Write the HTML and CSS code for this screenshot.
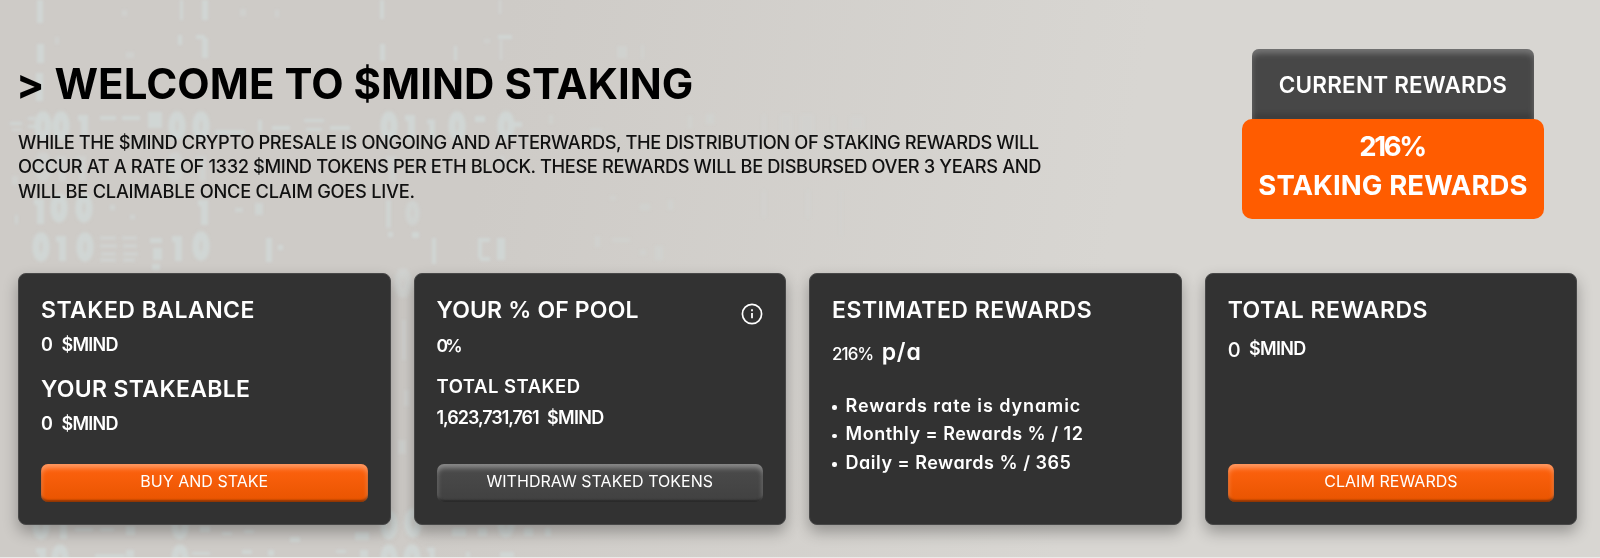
FILE: index.html
```html
<!DOCTYPE html>
<html lang="en">
<head>
    <meta charset="UTF-8">
    <meta name="viewport" content="width=device-width, initial-scale=1.0">
    <title>$MIND Staking</title>
    <link rel="stylesheet" href="styles.css">
</head>
<body>
    <!-- Faded binary code behind the content -->
    <svg class="code-bg" viewBox="0 0 1100 558" aria-hidden="true">
        <defs>
            <symbol id="zero" viewBox="0 0 18 30"><ellipse cx="9" cy="15" rx="5" ry="11" fill="none" stroke="#d0d6d4" stroke-width="7.5"/></symbol>
            <symbol id="one" viewBox="0 0 18 30"><path d="M4 4h10v25H7V10H4z" fill="#d0d6d4"/></symbol>
            <symbol id="dashes" viewBox="0 0 44 30"><path d="M2 6h16M24 6h15M2 14h17M25 14h14M3 22h15M25 22h15M2 28h16M25 28h12" stroke="#d0d6d4" stroke-width="2.5"/></symbol>
            <filter id="soft"><feGaussianBlur stdDeviation="1.8"/></filter>
        </defs>
        <g filter="url(#soft)" fill="#d0d6d4">
            <path d="M37 0h6v23h-6zM37 44h7v19h-7zM36 73h7v28h-7zM180 0h3v20h-3zM202 0h6v20h-6zM178 35h4v10h-4zM202 38h6v20h-6zM196 35h9v4h-9zM380 0h4v19h-4zM380 44h5v17h-5zM454 46h3v15h-3zM499 0h2v14h-2zM500 40h2v20h-2zM498 35h14v4h-14z"/>
            <path d="M122 10h5v6h-5zM240 9h6v7h-6zM275 10h4v7h-4zM55 37h4v7h-4zM126 52h8v6h-8zM484 39h6v4h-6zM617 46h10v12h-10zM641 45h3v14h-3z" opacity=".6"/>

            <path d="M10 122h12v3h-12zM12 129h10v2h-10zM28 117h7v3h-7zM28 125h7v3h-7z"/>
            <use href="#zero" x="34" y="111" width="18" height="30"/>
            <use href="#zero" x="52" y="111" width="18" height="30"/>
            <use href="#one" x="74" y="111" width="18" height="30"/>
            <path d="M100 116h16v4h-16zM122 116h18v4h-18zM148 112h14v16h-14zM215 130h30v4h-30zM258 120h4v12h-4zM272 126h18v4h-18zM304 119h20v3h-20zM306 128h16v3h-16zM330 126h20v4h-20z"/>
            <use href="#zero" x="168" y="111" width="18" height="30"/>
            <use href="#zero" x="192" y="111" width="18" height="30"/>
            <use href="#zero" x="380" y="111" width="18" height="30"/>
            <use href="#one" x="401" y="111" width="18" height="30"/>
            <use href="#one" x="424" y="115" width="14" height="26"/>
            <use href="#zero" x="448" y="111" width="18" height="30"/>
            <path d="M475 116h10v6h-10zM514 122h8v5h-8z"/>
            <use href="#zero" x="496" y="111" width="20" height="30"/>

            <g opacity=".6">
                <use href="#zero" x="34" y="152" width="18" height="30"/>
                <use href="#one" x="52" y="152" width="18" height="30"/>
                <use href="#one" x="72" y="152" width="18" height="30"/>
                <use href="#zero" x="166" y="152" width="18" height="30"/>
                <use href="#one" x="192" y="152" width="18" height="30"/>
                <use href="#one" x="382" y="152" width="18" height="30"/>
                <path d="M12 176h6v9h-6zM256 160h6v14h-6zM500 156h4v14h-4z"/>
            </g>

            <use href="#one" x="30" y="195" width="18" height="30"/>
            <use href="#zero" x="50" y="193" width="18" height="30"/>
            <use href="#zero" x="75" y="193" width="18" height="30"/>
            <use href="#one" x="194" y="196" width="18" height="30"/>
            <path d="M15 215h3v9h-3zM110 205h5v5h-5zM130 215h5v4h-5zM235 208h8v4h-8zM255 203h8v12h-8zM386 200h5v28h-5z" opacity=".8"/>
            <use href="#zero" x="405" y="198" width="15" height="30" opacity=".7"/>

            <use href="#zero" x="32" y="232" width="18" height="30"/>
            <use href="#one" x="52" y="232" width="18" height="30"/>
            <use href="#zero" x="75" y="232" width="20" height="30"/>
            <use href="#dashes" x="98" y="232" width="44" height="30"/>
            <path d="M150 238h12v5h-12zM153 248h9v12h-9zM152 264h8v6h-8zM266 238h6v24h-6zM278 245h5v5h-5zM388 232h5v5h-5zM412 232h7v6h-7zM432 238h4v26h-4zM478 238h12v4h-12zM478 242h4v16h-4zM480 257h10v4h-10zM497 238h8v22h-8z"/>
            <use href="#one" x="168" y="232" width="18" height="30"/>
            <use href="#zero" x="192" y="230" width="18" height="32"/>

            <use href="#zero" x="394" y="268" width="18" height="30" opacity=".6"/>
            <path d="M402 320h4v40h-4zM404 390h5v16h-5zM398 440h8v14h-8z" opacity=".6"/>

            <use href="#zero" x="32" y="510" width="18" height="30"/>
            <use href="#one" x="53" y="510" width="18" height="30"/>
            <use href="#zero" x="170" y="510" width="20" height="30"/>
            <use href="#zero" x="380" y="510" width="18" height="30"/>
            <use href="#zero" x="404" y="508" width="18" height="30"/>
            <use href="#zero" x="496" y="508" width="20" height="30"/>
            <path d="M75 528h18v3h-18zM100 528h14v3h-14zM126 526h9v9h-9zM200 526h10v6h-10zM222 532h10v3h-10zM244 530h10v3h-10zM290 537h10v5h-10zM355 532h14v8h-14zM452 528h14v8h-14zM478 528h9v8h-9zM524 528h9v8h-9zM545 528h6v8h-6z"/>
            <use href="#one" x="32" y="544" width="18" height="30"/>
            <use href="#zero" x="51" y="544" width="18" height="30"/>
            <use href="#zero" x="170" y="544" width="20" height="30"/>
            <use href="#zero" x="380" y="544" width="18" height="30"/>
            <use href="#zero" x="402" y="544" width="20" height="30"/>
            <use href="#one" x="424" y="541" width="14" height="30"/>
            <path d="M95 554h30v4h-30zM126 550h8v8h-8zM192 552h18v3h-18zM242 550h10v4h-10zM268 550h6v6h-6zM336 550h10v3h-10zM360 550h8v8h-8zM466 552h4v6h-4zM500 552h14v6h-14z"/>

            <path d="M549 115h4v9h-4zM590 128h12v5h-12zM610 196h6v4h-6zM640 204h10v6h-10zM668 200h5v10h-5zM595 236h5v11h-5zM612 238h18v4h-18zM640 250h6v5h-6zM655 246h8v14h-8zM688 116h4v12h-4zM706 114h8v10h-8z" opacity=".45"/>
            <path d="M762 114h4v26h-4zM780 114h12v26h-12zM800 114h14v26h-14zM832 116h3v18h-3zM850 116h14v14h-14zM762 190h4v28h-4zM806 190h4v28h-4zM840 190h2v46h-2z" opacity=".22"/>
        </g>
    </svg>

    <main class="staking">
        <section class="hero">
            <div class="intro">
                <h1>&gt; WELCOME TO $MIND STAKING</h1>
                <p>WHILE THE $MIND CRYPTO PRESALE IS ONGOING AND AFTERWARDS, THE DISTRIBUTION OF STAKING REWARDS WILL<br>
                OCCUR AT A RATE OF 1332 $MIND TOKENS PER ETH BLOCK. THESE REWARDS WILL BE DISBURSED OVER 3 YEARS AND<br>
                <span class="last-line">WILL BE CLAIMABLE ONCE CLAIM GOES LIVE.</span></p>
            </div>
            <div class="rewards">
                <div class="rewards-label">CURRENT REWARDS</div>
                <div class="rewards-rate"><span class="percent">216%</span><span>STAKING REWARDS</span></div>
            </div>
        </section>

        <section class="cards">
            <div class="card">
                <h2>STAKED BALANCE</h2>
                <div class="value"><span>0</span><span class="token">$MIND</span></div>
                <h2 class="second">YOUR STAKEABLE</h2>
                <div class="value"><span>0</span><span class="token">$MIND</span></div>
                <button class="btn">BUY AND STAKE</button>
            </div>

            <div class="card">
                <div class="card-head">
                    <h2 class="pool">YOUR % OF POOL</h2>
                    <svg class="info" viewBox="0 0 22 22" fill="none" stroke="#fff">
                        <circle cx="11" cy="11" r="9.6" stroke-width="1.7"/>
                        <path d="M11 10v5.2M11 6.2v2" stroke-width="1.8"/>
                    </svg>
                </div>
                <div class="value"><span class="pool-share">0%</span></div>
                <h3>TOTAL STAKED</h3>
                <div class="value total"><span class="amount">1,623,731,761</span><span class="token">$MIND</span></div>
                <button class="btn btn-dark">WITHDRAW STAKED TOKENS</button>
            </div>

            <div class="card">
                <h2>ESTIMATED REWARDS</h2>
                <div class="estimate"><span class="rate">216%</span><span class="pa">p/a</span></div>
                <ul>
                    <li class="wide">Rewards rate is dynamic</li>
                    <li>Monthly = Rewards % / 12</li>
                    <li>Daily = Rewards % / 365</li>
                </ul>
            </div>

            <div class="card">
                <h2>TOTAL REWARDS</h2>
                <div class="value claimable"><span class="big">0</span><span class="token">$MIND</span></div>
                <button class="btn">CLAIM REWARDS</button>
            </div>
        </section>
    </main>
</body>
</html>
```
FILE: styles.css
```css
* {
    box-sizing: border-box;
}
body {
    margin: 0;
    height: 558px;
    position: relative;
    overflow: hidden;
    background: linear-gradient(100deg, #cecbc7 30%, #d8d6d2 68%);
    border-bottom: 1px solid #ebeae8;
    font-family: Inter, "Liberation Sans", sans-serif;
    font-feature-settings: "cv11"; /* single-storey a */
    color: #fff;
}
h1, h2, h3, p, ul {
    margin: 0;
    padding: 0;
}
.code-bg {
    position: absolute;
    top: 0;
    left: 0;
    width: 1100px;
    height: 558px;
}
.staking {
    position: relative;
    padding: 49px 22.8px 0 18px;
}

/* Heading and rewards badge */
.hero {
    display: flex;
    justify-content: space-between;
    align-items: flex-start;
    height: 224px;
    color: #000;
}
.intro {
    padding-top: 10px;
}
h1 {
    margin-left: -2px;
    font-size: 42px;
    line-height: 50px;
    font-weight: 700;
    letter-spacing: 0.03px;
    white-space: nowrap;
}
.intro p {
    margin-top: 20.5px;
    font-size: 18.3px;
    line-height: 24.5px;
    font-weight: 500;
    letter-spacing: -0.39px;
    white-space: nowrap;
    color: #111;
}
.intro .last-line {
    letter-spacing: -0.26px;
}
.rewards {
    display: flex;
    flex-direction: column;
    align-items: center;
    margin-right: 33.2px;
    color: #fff;
}
.rewards-label {
    width: 282px;
    height: 69.5px;
    border-radius: 7px 7px 0 0;
    background: #474747;
    box-shadow: inset 0 4px 6px rgba(255, 255, 255, 0.28), inset 0 -4px 6px rgba(0, 0, 0, 0.2);
    text-align: center;
    font-size: 22.5px;
    line-height: 71px;
    font-weight: 600;
    letter-spacing: 0.2px;
}
.rewards-rate {
    display: flex;
    flex-direction: column;
    align-items: center;
    width: 302px;
    height: 100.5px;
    padding-top: 8.5px;
    border-radius: 10px;
    background: #ff5c00;
    font-size: 27.5px;
    line-height: 39px;
    font-weight: 700;
    letter-spacing: 0.1px;
}
.percent {
    margin-right: 2px;
    letter-spacing: -2.3px;
}

/* Cards */
.cards {
    display: grid;
    grid-template-columns: repeat(4, 1fr);
    gap: 23px;
}
.card {
    display: flex;
    flex-direction: column;
    height: 252px;
    padding: 21.5px 22px 22.5px;
    background: #323232;
    border: 1px solid #484848;
    border-radius: 8px;
    box-shadow: 0 7px 15px rgba(0, 0, 0, 0.3);
}
.card h2 {
    font-size: 23px;
    line-height: 28px;
    font-weight: 600;
    letter-spacing: 0.47px;
}
.card .second {
    margin-top: 18px;
    letter-spacing: 0.33px;
}
.card .pool {
    letter-spacing: 0.15px;
}
.card h3 {
    margin-top: 16px;
    font-size: 18.5px;
    line-height: 24px;
    font-weight: 600;
    letter-spacing: 0.5px;
}
.card-head {
    display: flex;
    justify-content: space-between;
}
.info {
    width: 22px;
    height: 22px;
    margin: 7.5px 0.5px 0 0;
}
.value {
    display: flex;
    gap: 8.5px;
    margin-top: 9.3px;
    font-size: 18px;
    line-height: 24px;
    font-weight: 600;
}
.total {
    margin-top: 7.5px;
}
.token {
    letter-spacing: -0.7px;
}
.pool-share {
    font-size: 17.5px;
    letter-spacing: -3px;
}
.amount {
    letter-spacing: -1.05px;
}
.claimable {
    margin-top: 13.5px;
}
.big {
    font-size: 20px;
    line-height: 27px;
    font-weight: 500;
}
.estimate {
    display: flex;
    align-items: baseline;
    gap: 8.5px;
    margin-top: 13px;
    line-height: 30px;
}
.rate {
    font-size: 17px;
    font-weight: 500;
    letter-spacing: -1px;
}
.pa {
    font-size: 23px;
    font-weight: 600;
    letter-spacing: 0.8px;
}
.card ul {
    margin-top: 23px;
    list-style: none;
    font-size: 18px;
    line-height: 28.5px;
    font-weight: 600;
    letter-spacing: 0.5px;
}
.card li {
    display: flex;
    align-items: center;
    gap: 9px;
}
.card li::before {
    content: "";
    width: 4.5px;
    height: 4.5px;
    margin-top: 3px;
    border-radius: 50%;
    background: #fff;
}
.card .wide {
    letter-spacing: 0.92px;
}
.btn {
    height: 37.5px;
    margin-top: auto;
    padding: 0 0 3px;
    border: none;
    border-radius: 7px;
    background: linear-gradient(#ff6310, #e85400);
    box-shadow: inset 0 4px 5px rgba(255, 255, 255, 0.35), inset 0 -2px 2px rgba(0, 0, 0, 0.4);
    color: #fff;
    font-family: inherit;
    font-size: 16px;
    letter-spacing: 0.03px;
    cursor: pointer;
}
.btn-dark {
    background: linear-gradient(#4b4b4b, #414141);
}
```
